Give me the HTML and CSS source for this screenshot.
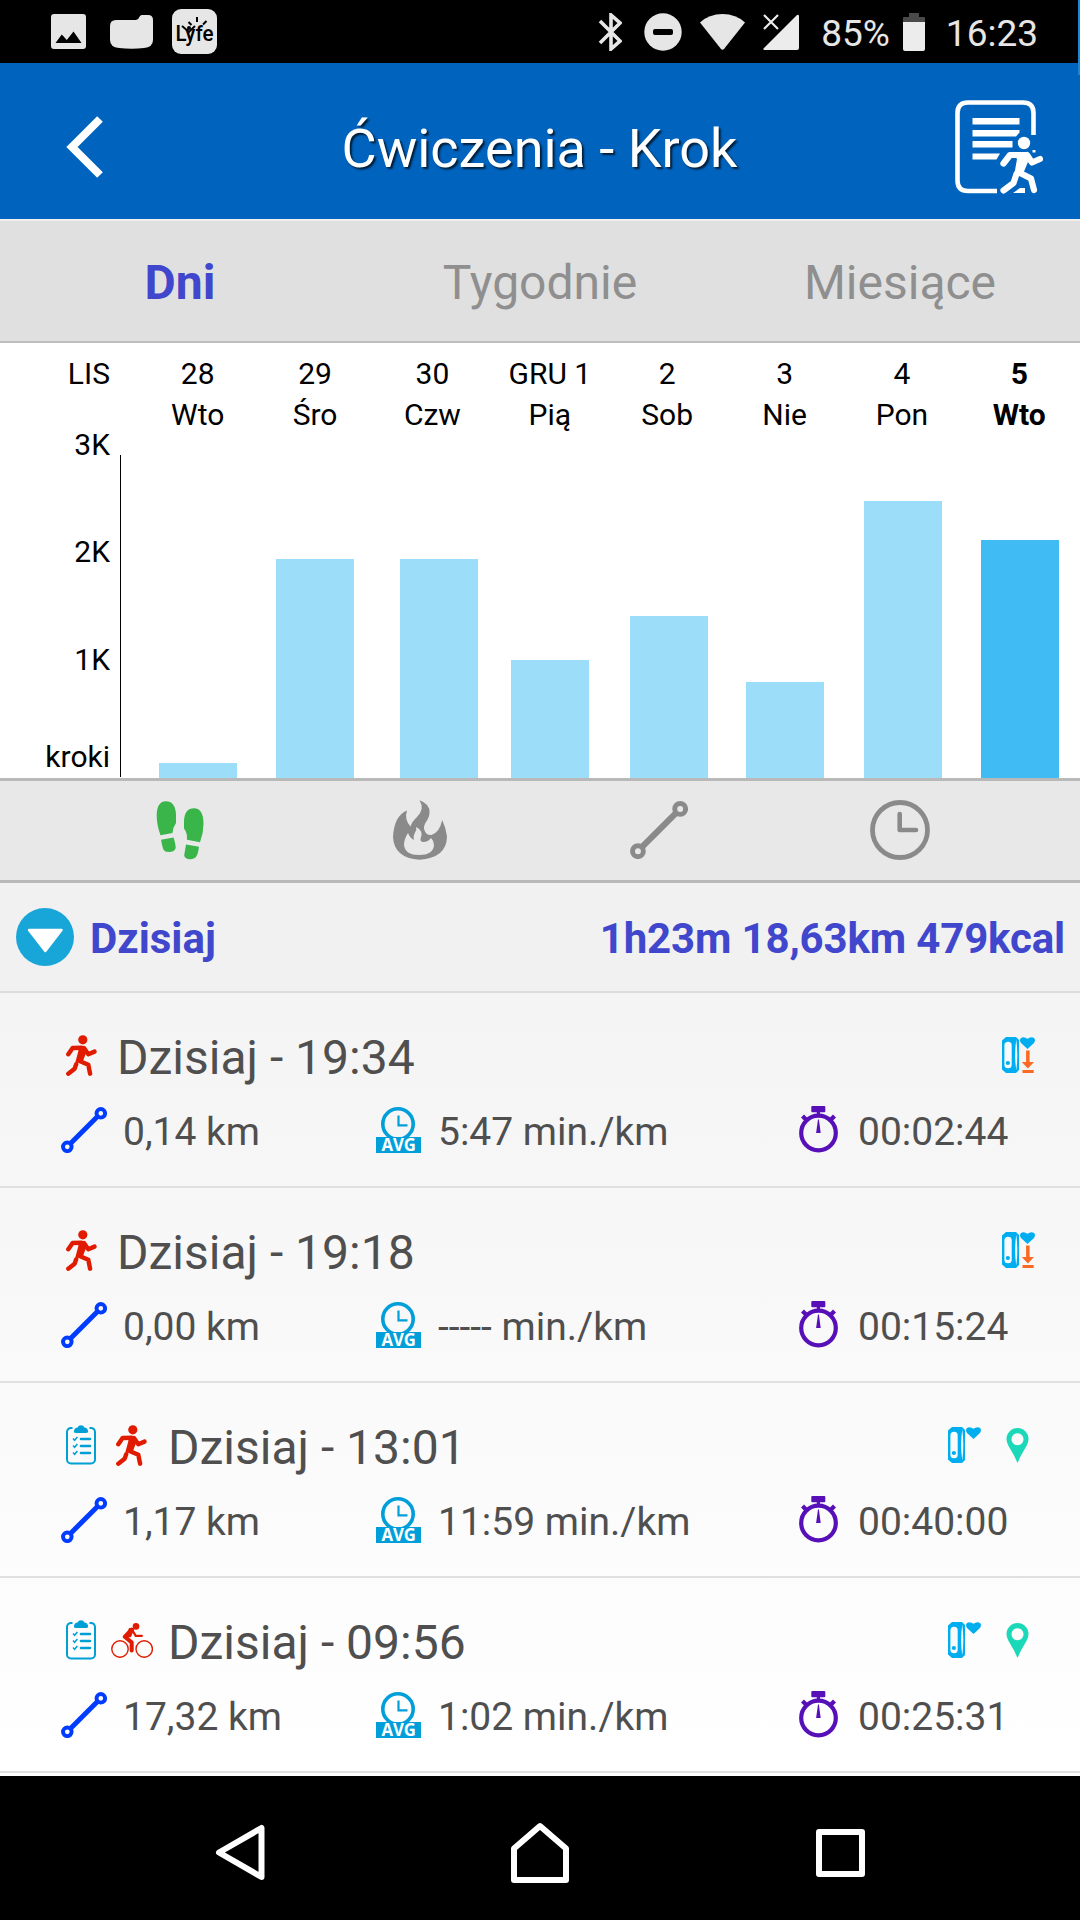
FILE: index.html
```html
<!DOCTYPE html>
<html lang="pl">
  <head>
    <meta charset="UTF-8" />
    <title>Ćwiczenia - Krok</title>
    <link rel="stylesheet" href="styles.css">
  </head>
  <body>
    <!-- shared icons -->
    <svg class="sprite" width="0" height="0">
      <symbol id="i-run" viewBox="0 0 31 41">
        <circle cx="16.8" cy="4.8" r="4.6" fill="currentColor" />
        <path d="M9 11.2h9.5l2 5.6-3.6 9.5-7.6 1.2 3.2-12z" fill="currentColor" />
        <path d="M2.3 19.3L6.6 13l9-.2M18 13l4.3 6.2 6.2-2.6M13 25.8l9.3 4 1.8 8.9M10.2 29.2l-1.6 4.6-6.3 4.9" fill="none" stroke="currentColor" stroke-width="4.4" stroke-linecap="round" stroke-linejoin="round" />
      </symbol>
      <symbol id="i-bike" viewBox="0 0 42 35">
        <g fill="none" stroke="currentColor">
          <circle cx="9" cy="26" r="8.2" stroke-width="1.4" />
          <circle cx="33.2" cy="26" r="8.2" stroke-width="1.4" />
          <path d="M20.5 6.5l-6.8 7.3 7 5.600v8" stroke-width="4" stroke-linejoin="round" stroke-linecap="round" />
          <path d="M21.500 7.500l3.200 5.300h6.200" stroke-width="2.200" stroke-linecap="round" />
        </g>
        <path d="M18 5l5.500.5L20 14l-5 1z" fill="currentColor" />
        <circle cx="25" cy="3.4" r="3.3" fill="currentColor" />
      </symbol>
      <symbol id="i-route" viewBox="0 0 46 46">
        <path d="M10 36L36 10" fill="none" stroke="currentColor" stroke-width="5" />
        <circle cx="39.8" cy="6.3" r="4.3" fill="none" stroke="currentColor" stroke-width="3.9" />
        <circle cx="6.3" cy="39.8" r="4.3" fill="none" stroke="currentColor" stroke-width="3.9" />
      </symbol>
      <symbol id="i-avg" viewBox="0 0 46 46">
        <circle cx="22" cy="17" r="15.2" fill="none" stroke="currentColor" stroke-width="3.6" />
        <path d="M22.5 8.5v9.8h9" fill="none" stroke="currentColor" stroke-width="2.2" />
        <path d="M0 30h45v16H0z" fill="currentColor" />
        <text x="22.7" y="43.7" class="avg-text" text-anchor="middle" textLength="34.5" lengthAdjust="spacingAndGlyphs">AVG</text>
      </symbol>
      <symbol id="i-stopwatch" viewBox="0 0 39 47">
        <circle cx="19.5" cy="27" r="17.3" fill="none" stroke="currentColor" stroke-width="4.2" />
        <path d="M13.3 0h12a1 1 0 0 1 1 1v4.2a1 1 0 0 1-1 1H21v4h-3.2v-4h-4.5a1 1 0 0 1-1-1V1a1 1 0 0 1 1-1zM2 11.5l3-3 4.5 4.5-3 3zM37 11.5l-3-3-4.5 4.5 3 3zM19 13.5h.9L21.7 27h-4.6z" fill="currentColor" />
      </symbol>
      <symbol id="i-clipboard" viewBox="0 0 30 40">
        <path d="M6.5 3H5.2A4 4 0 0 0 1 7v27.5a4 4 0 0 0 4 4h20a4 4 0 0 0 4-4V7a4 4 0 0 0-4.2-4h-1.3" fill="none" stroke="currentColor" stroke-width="2" />
        <path d="M8 5.5Q9 2.5 11.5 2.5Q12.5.3 15 .3t3.500 2.200Q21 2.500 22 5.500q.6 2.500-2 2.500H10q-2.600 0-2-2.500z" fill="currentColor" />
        <path d="M15 14h9M15 21h9M15 28h9" stroke="currentColor" stroke-width="2.6" stroke-linecap="round" />
        <path d="M7 13.6l1.6 1.7 2.8-3.400M7 20.600l1.600 1.700 2.800-3.400M7 27.600l1.600 1.700 2.800-3.400" fill="none" stroke="currentColor" stroke-width="1.500" />
      </symbol>
      <symbol id="i-band" viewBox="0 0 33 36">
        <path d="M4 0h10l3 3v30l-3 3H4l-4-3.500v-29z" fill="#00aeef" />
        <rect x="2.4" y="4.8" width="7.3" height="26.5" rx="3.6" fill="#f8fafb" />
        <path d="M14.3 2.5q-2.500 15.500 0 31 2-15.500 0-31z" fill="#f0f8fc" />
        <circle cx="5.9" cy="26" r="2.1" fill="#00aeef" />
        <path d="M25.5 12L19 6Q17.2 3.3 18.7 1.2 21.8-1.2 25.5 1.8 29.2-1.2 32.3 1.2 33.8 3.3 32 6z" fill="#00aeef" />
      </symbol>
      <symbol id="i-sync" viewBox="0 0 33 36">
        <path d="M24.1 13.500h3.500V25H32l-6.100 6.500-6.100-6.500h4.300zM20.500 33h11.200v3H20.500z" fill="#f96b22" />
      </symbol>
      <symbol id="i-pin" viewBox="0 0 22 35">
        <path fill-rule="evenodd" d="M11 35Q8.5 28.5 3.5 20.5 0 15 0 11a11 11 0 0 1 22 0q0 4-3.5 9.5Q13.5 28.5 11 35zM11 5.2a6 6 0 1 0 .01 0z" fill="currentColor" />
      </symbol>
    </svg>

    <div class="status-bar">
      <div class="notifications">
        <svg width="35" height="35" viewBox="0 0 35 35">
          <path fill-rule="evenodd" d="M3 0h29a3 3 0 0 1 3 3v29a3 3 0 0 1-3 3H3a3 3 0 0 1-3-3V3a3 3 0 0 1 3-3zM4.500 29h26L22.500 17.500l-6.700 8.500-5-5.500z" fill="#e6e6e6" />
        </svg>
        <svg class="folder" width="43" height="34" viewBox="0 0 43 34">
          <path d="M6 5h20q2.5-.4 4-4l1.500-1H38q5 0 5 5v20q0 7-9 8-12 1.500-25 0-9-1-9-8V11q0-6 6-6z" fill="#e6e6e6" />
        </svg>
        <svg class="lyfe" width="45" height="45" viewBox="0 0 45 45">
          <rect width="45" height="45" rx="9" fill="#e6e6e6" />
          <text x="3.500" y="31.500" class="lyfe-text" textLength="38" lengthAdjust="spacingAndGlyphs">Lyfe</text>
          <path d="M16.500 13l3 3M25 8v5M34.500 12l-3.500 3.500M10 17l7 6 6-6" fill="none" stroke="#000" stroke-width="2" />
          <circle cx="17" cy="19" r="2" />
        </svg>
      </div>
      <div class="system">
        <svg width="24" height="38" viewBox="0 0 24 38">
          <path d="M2 8l20 20-9 8V2l9 8L2 30" fill="none" stroke="#e6e6e6" stroke-width="3.600" />
        </svg>
        <svg class="dnd" width="38" height="38" viewBox="0 0 38 38">
          <circle cx="19" cy="19" r="18.700" fill="#e6e6e6" />
          <rect x="9" y="16" width="20" height="6" rx="2" />
        </svg>
        <svg class="wifi" width="45" height="36" viewBox="0 0 45 36">
          <path d="M0 8.500Q9 0 22.500 0T45 8.500L24 35q-1.500 1.500-3 0z" fill="#e6e6e6" />
        </svg>
        <svg class="signal" width="36" height="36" viewBox="0 0 36 36">
          <path d="M36 1.500V34a2 2 0 0 1-2 2H1q-1-.5-.5-1.500L34 1q1.500-.8 2 .5z" fill="#ececec" />
          <path d="M1 1l14 14M15 1L1 15" stroke="#ececec" stroke-width="2.200" />
        </svg>
        <span class="percent">85%</span>
        <svg class="battery" width="22" height="38" viewBox="0 0 22 38">
          <path d="M0 9V5q0-1 1-1h5V0h10v4h5q1 0 1 1v4z" fill="#4a4a4a" />
          <path d="M0 9h22v27q0 2-2 2H2q-2 0-2-2z" fill="#ececec" />
        </svg>
        <span class="clock">16:23</span>
      </div>
    </div>
    <div class="edge"></div>

    <header class="header">
      <svg width="37" height="62" viewBox="0 0 37 62">
        <path d="M34 3L6 31l28 28" fill="none" stroke="#fff" stroke-width="8" />
      </svg>
      <h1>Ćwiczenia - Krok</h1>
      <svg width="88" height="94" viewBox="0 0 88 94">
        <g fill="none" stroke="#fff">
          <path d="M78.500 35V13q0-10.500-10.500-10.500H13Q2.500 2.500 2.500 13v67.500Q2.500 91 13 91h29" stroke-width="4.600" />
          <path d="M79 50v2.500" stroke-width="3" />
          <path d="M48.500 63.500L55 55h10M72 55l5 7.500 8-3.500M64 72.500l12 6 3 11.500M61.500 74l-3 9-10 7.500" stroke-width="6.200" stroke-linecap="round" stroke-linejoin="round" />
        </g>
        <path d="M17.500 18h47v6.500h-47zM17.500 30h47v2.500L61 36.500H17.500zM17.500 41h40v6.500h-40zM17.500 53.500h27.500l-3.500 6h-24zM58 93l7-5h5v5zM57 52h15l3 5-7 17-9 2 3-17z" fill="#fff" />
        <circle cx="69" cy="43" r="6.200" fill="#fff" />
      </svg>
    </header>

    <nav class="tabs">
      <a class="active">Dni</a>
      <a>Tygodnie</a>
      <a>Miesiące</a>
    </nav>

    <section class="chart">
      <div class="days">
        <div class="month">LIS</div>
        <div>28<br>Wto</div>
        <div>29<br>Śro</div>
        <div>30<br>Czw</div>
        <div>GRU 1<br>Pią</div>
        <div>2<br>Sob</div>
        <div>3<br>Nie</div>
        <div>4<br>Pon</div>
        <div class="today">5<br>Wto</div>
      </div>
      <div class="plot">
        <div class="scale">
          <span>3K</span>
          <span>2K</span>
          <span>1K</span>
          <span>kroki</span>
        </div>
        <div class="axis"></div>
        <div class="bars">
          <div class="bar" style="height: 15px"></div>
          <div class="bar" style="height: 219px"></div>
          <div class="bar" style="height: 219px"></div>
          <div class="bar" style="height: 118px"></div>
          <div class="bar" style="height: 162px"></div>
          <div class="bar" style="height: 96px"></div>
          <div class="bar" style="height: 277px"></div>
          <div class="bar selected" style="height: 238px"></div>
        </div>
      </div>
    </section>

    <div class="metrics">
      <svg width="48" height="59" viewBox="0 0 48 59">
        <path d="M4.500 34.300Q.7 24 .7 14 1 .3 10 .3T20 13v9q-3.500 5-3.500 10zM5 38.700l12.500-2.300Q20 44 19.600 47.500 18 51 13 51T7 47.500 5 38.700zM44 41.300L31 38.700Q31.500 32 28 27.500V20Q28.500 7.300 38 7.300T47.500 23q0 9-3.500 18.300zM30 43.500l13 2.300Q42 54 39.500 56.500 37 58.500 34 58.300q-5.500-.3-5.800-4z" fill="#39b54a" />
      </svg>
      <svg width="54" height="60" viewBox="0 0 54 60">
        <path fill-rule="evenodd" d="M26.500.3Q37 4 36.500 12.500 36.500 17 33 22q-3.500 5-1 9.500 2 4 6.500 3.500 8-2.500 10.700-15Q53 28 54 36.500 53.500 58 26.500 59.700 1 58 0 37 1 16 14 10.500q-3 9 3.500 16Q19 21.500 24 17q8-8 2.500-16.700zM15 33q-4 6-4 12 1 10 15 10 14.500 0 15-10 0-4-3-7-3 4-7.500 4Q27 42 27.500 39q3.500-8.500-4.500-12 1 3-1 5.500-2 3-1.200 7.500Q17 38 15 33z" fill="#8a8a8a" />
      </svg>
      <svg width="58" height="58" class="gray"><use href="#i-route" /></svg>
      <svg width="60" height="60" viewBox="0 0 60 60">
        <circle cx="30" cy="30" r="27.500" fill="none" stroke="#8a8a8a" stroke-width="4.800" />
        <path d="M29.700 14v16H46" fill="none" stroke="#8a8a8a" stroke-width="4.600" stroke-linecap="round" stroke-linejoin="round" />
      </svg>
    </div>

    <div class="group">
      <svg width="58" height="58" viewBox="0 0 58 58">
        <circle cx="29" cy="29" r="29" fill="#18a5d8" />
        <path d="M13 22h32.500L29.300 43z" fill="#fff" stroke="#fff" stroke-width="2.500" stroke-linejoin="round" />
      </svg>
      <span>Dzisiaj</span>
      <span class="summary">1h23m 18,63km 479kcal</span>
    </div>

    <main class="list">
      <article class="workout">
        <div class="top">
          <svg class="run"><use href="#i-run" /></svg>
          <h2>Dzisiaj - 19:34</h2>
          <div class="source">
            <svg class="band"><use href="#i-band" /><use href="#i-sync" /></svg>
          </div>
        </div>
        <div class="stats">
          <div><svg class="route"><use href="#i-route" /></svg><span>0,14 km</span></div>
          <div><svg class="avg"><use href="#i-avg" /></svg><span>5:47 min./km</span></div>
          <div><svg class="stopwatch"><use href="#i-stopwatch" /></svg><span>00:02:44</span></div>
        </div>
      </article>

      <article class="workout">
        <div class="top">
          <svg class="run"><use href="#i-run" /></svg>
          <h2>Dzisiaj - 19:18</h2>
          <div class="source">
            <svg class="band"><use href="#i-band" /><use href="#i-sync" /></svg>
          </div>
        </div>
        <div class="stats">
          <div><svg class="route"><use href="#i-route" /></svg><span>0,00 km</span></div>
          <div><svg class="avg"><use href="#i-avg" /></svg><span>----- min./km</span></div>
          <div><svg class="stopwatch"><use href="#i-stopwatch" /></svg><span>00:15:24</span></div>
        </div>
      </article>

      <article class="workout">
        <div class="top">
          <svg class="clipboard"><use href="#i-clipboard" /></svg>
          <svg class="run"><use href="#i-run" /></svg>
          <h2>Dzisiaj - 13:01</h2>
          <div class="source with-pin">
            <svg class="band"><use href="#i-band" /></svg>
            <svg class="pin"><use href="#i-pin" /></svg>
          </div>
        </div>
        <div class="stats">
          <div><svg class="route"><use href="#i-route" /></svg><span>1,17 km</span></div>
          <div><svg class="avg"><use href="#i-avg" /></svg><span>11:59 min./km</span></div>
          <div><svg class="stopwatch"><use href="#i-stopwatch" /></svg><span>00:40:00</span></div>
        </div>
      </article>

      <article class="workout">
        <div class="top">
          <svg class="clipboard"><use href="#i-clipboard" /></svg>
          <svg class="bike"><use href="#i-bike" /></svg>
          <h2>Dzisiaj - 09:56</h2>
          <div class="source with-pin">
            <svg class="band"><use href="#i-band" /></svg>
            <svg class="pin"><use href="#i-pin" /></svg>
          </div>
        </div>
        <div class="stats">
          <div><svg class="route"><use href="#i-route" /></svg><span>17,32 km</span></div>
          <div><svg class="avg"><use href="#i-avg" /></svg><span>1:02 min./km</span></div>
          <div><svg class="stopwatch"><use href="#i-stopwatch" /></svg><span>00:25:31</span></div>
        </div>
      </article>
    </main>

    <footer class="nav-bar">
      <svg width="50" height="58" viewBox="0 0 50 58">
        <path d="M46.500 4v49L4 28.500z" fill="none" stroke="#fff" stroke-width="6" stroke-linejoin="round" />
      </svg>
      <svg width="58" height="62" viewBox="0 0 58 62">
        <path d="M3 58V26.500L29 4l26 22.500V58z" fill="none" stroke="#fff" stroke-width="6" stroke-linejoin="round" />
      </svg>
      <svg width="49" height="48" viewBox="0 0 49 48">
        <rect x="3" y="3" width="43" height="42" fill="none" stroke="#fff" stroke-width="6" stroke-linejoin="round" />
      </svg>
    </footer>
  </body>
</html>
```
FILE: styles.css
```css
* {
  box-sizing: border-box;
  margin: 0;
  padding: 0;
}

body {
  width: 1080px;
  height: 1920px;
  overflow: hidden;
  background-color: #f0f0f0;
  font-family: Roboto, sans-serif;
}

svg {
  display: block;
  flex: none;
}

.sprite {
  display: none;
}

.status-bar {
  display: flex;
  justify-content: space-between;
  height: 63px;
  padding: 0 42px 0 51px;
  background-color: #000;
  color: #e6e6e6;
  font-size: 37px;
}

.notifications, .system {
  display: flex;
  align-items: center;
}

.folder {
  margin-left: 24px;
}

.lyfe {
  margin-left: 19px;
}

.lyfe-text {
  font-size: 22px;
  font-weight: 500;
}

.dnd {
  margin-left: 22px;
}

.wifi, .signal {
  margin-left: 18px;
}

.percent {
  margin-left: 22px;
  padding-top: 3px;
}

.battery {
  margin-left: 13px;
}

.clock {
  margin-left: 21px;
  padding-top: 3px;
}

/* edge panel handle, sits over the status bar and the header */
.edge {
  position: absolute;
  top: 0;
  right: 0;
  width: 2px;
  height: 75px;
  background-color: #1c87d6;
}

.header {
  display: flex;
  align-items: center;
  justify-content: space-between;
  height: 158px;
  padding: 17px 37px 5px 66px;
  background-color: #0063be;
  border-bottom: 2px solid #eee;
}

.header h1 {
  margin-left: 21px;
  padding-top: 2px;
  color: #fff;
  font-size: 54px;
  font-weight: 400;
  text-shadow: 2px 2px 2px rgba(0, 0, 0, .7);
}

.tabs {
  display: flex;
  height: 122px;
  background-color: #e0e0e0;
  border-bottom: 2px solid #bebebe;
}

.tabs a {
  flex: 1;
  color: #8f8f8f;
  font-size: 48px;
  line-height: 123px;
  text-align: center;
}

.tabs .active {
  color: #4047cc;
  font-weight: 700;
}

.chart {
  height: 438px;
  padding-top: 10px;
  background-color: #fff;
  border-bottom: 3px solid #b9b9b9;
  color: #000;
  font-size: 30px;
}

.days {
  display: grid;
  grid-template-columns: 139px repeat(8, 1fr);
  padding-right: 2px;
  line-height: 41px;
  text-align: center;
}

.days .month {
  padding-right: 29px;
  text-align: right;
}

.days .today {
  font-weight: 700;
}

.plot {
  display: flex;
  height: 343px;
}

.scale {
  width: 110px;
  line-height: 20px;
  text-align: right;
}

.scale span {
  display: block;
  margin-bottom: 87px;
}

.scale span:nth-child(2) {
  margin-bottom: 88px;
}

.scale span:nth-child(3) {
  margin-bottom: 77px;
}

.axis {
  width: 1px;
  height: 322px;
  margin: 20px 38px 0 10px;
  background-color: #000;
}

.bars {
  display: flex;
  align-items: flex-end;
}

.bar {
  width: 78px;
  margin-right: 39px;
  background-color: #9cddf9;
}

.bar:nth-child(2) {
  margin-right: 46px;
}

.bar:nth-child(3) {
  margin-right: 33px;
}

.bar:nth-child(4) {
  margin-right: 41px;
}

.bar:nth-child(5) {
  margin-right: 38px;
}

.bar:nth-child(6) {
  margin-right: 40px;
}

.bar.selected {
  margin-right: 0;
  background-color: #40bbf4;
}

.metrics {
  display: grid;
  grid-template-columns: repeat(4, 240px);
  align-items: center;
  justify-items: center;
  height: 102px;
  padding: 0 60px 1px;
  background-color: #e8e8e8;
  border-bottom: 3px solid #b9b9b9;
}

.gray {
  margin-right: 2px;
  color: #8a8a8a;
}

.group {
  display: flex;
  align-items: center;
  height: 110px;
  padding: 0 15px 0 16px;
  background-color: #f1f1f1;
  border-bottom: 2px solid #dcdcdc;
  color: #4047cc;
  font-size: 42px;
  font-weight: 700;
}

.group span {
  margin-left: 16px;
  padding-top: 2px;
}

.group .summary {
  margin-left: auto;
  letter-spacing: -.15px;
}

.list {
  height: 783px;
  background: linear-gradient(#f4f4f4, #fff 780px);
  color: #4f4f4f;
}

.workout {
  height: 195px;
  padding-top: 32px;
  border-bottom: 2px solid #e0e0e0;
}

.top {
  display: flex;
  align-items: center;
  height: 60px;
  padding-left: 66px;
}

.top h2 {
  margin-left: 20px;
  padding-top: 5px;
  font-size: 48px;
  font-weight: 400;
}

.run {
  width: 31px;
  height: 41px;
  color: #e01b00;
}

.clipboard {
  width: 30px;
  height: 40px;
  color: #00a0d6;
}

.clipboard + .run {
  margin-left: 20px;
}

.clipboard + .run + h2 {
  margin-left: 21px;
}

.bike {
  width: 42px;
  height: 35px;
  margin-left: 15px;
  color: #e01b00;
}

.bike + h2 {
  margin-left: 15px;
}

.source {
  display: flex;
  align-items: center;
  margin-left: auto;
  padding-right: 45px;
}

.source.with-pin {
  padding-right: 51px;
}

.band {
  width: 33px;
  height: 36px;
}

.pin {
  width: 23px;
  height: 35px;
  margin-left: 25px;
  color: #1bd9b8;
}

.stats {
  display: grid;
  grid-template-columns: 315px 423px auto;
  height: 46px;
  margin-top: 19px;
  padding-left: 61px;
  font-size: 39px;
}

.stats div {
  display: flex;
  align-items: center;
}

.stats span {
  margin-left: 16px;
  padding-top: 5px;
}

.route {
  width: 46px;
  height: 46px;
  color: #003cff;
}

.avg {
  width: 46px;
  height: 46px;
  color: #009fd9;
}

.avg-text {
  fill: #fff;
  font-family: "Open Sans", sans-serif;
  font-size: 17px;
  font-weight: 700;
}

.stopwatch {
  width: 39px;
  height: 47px;
  color: #570fb8;
}

.stopwatch + span {
  margin-left: 20px;
}

.nav-bar {
  display: grid;
  grid-template-columns: repeat(3, 300px);
  align-items: center;
  justify-content: center;
  justify-items: center;
  height: 144px;
  padding-top: 10px;
  background-color: #000;
}
```
